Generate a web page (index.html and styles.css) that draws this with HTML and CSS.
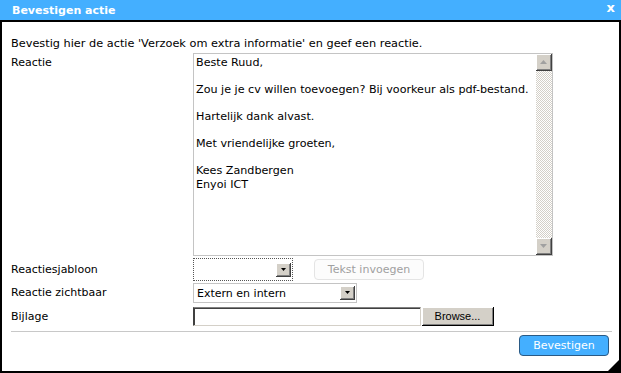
FILE: index.html
```html
<!DOCTYPE html>
<html lang="nl">
<head>
    <meta charset="UTF-8">
    <title>Bevestigen actie</title>
    <link rel="stylesheet" href="styles.css">
</head>
<body>
    <div class="dialog">
        <div class="titlebar">
            <span class="title">Bevestigen actie</span>
            <span class="close">x</span>
        </div>
        <div class="content">
            <p class="intro">Bevestig hier de actie 'Verzoek om extra informatie' en geef een reactie.</p>

            <div class="row row-top">
                <label class="label">Reactie</label>
                <div class="textarea">
                    <div class="textarea-text">Beste Ruud,

Zou je je cv willen toevoegen? Bij voorkeur als pdf-bestand.

Hartelijk dank alvast.

Met vriendelijke groeten,

Kees Zandbergen
Enyoi ICT</div>
                    <div class="scrollbar">
                        <span class="sb-btn">
                            <svg width="7" height="4" viewBox="0 0 7 4"><polygon points="3.5,0 7,4 0,4" fill="#a0a0a0"/></svg>
                        </span>
                        <span class="sb-track"></span>
                        <span class="sb-btn">
                            <svg width="7" height="4" viewBox="0 0 7 4"><polygon points="0,0 7,0 3.5,4" fill="#a0a0a0"/></svg>
                        </span>
                    </div>
                </div>
            </div>

            <div class="row row-sjabloon">
                <label class="label">Reactiesjabloon</label>
                <div class="select select-focus">
                    <span class="select-value"></span>
                    <span class="select-btn">
                        <svg width="5" height="3" viewBox="0 0 5 3"><polygon points="0,0 5,0 2.5,3" fill="#000"/></svg>
                    </span>
                </div>
                <button class="btn-disabled" disabled>Tekst invoegen</button>
            </div>

            <div class="row row-zichtbaar">
                <label class="label">Reactie zichtbaar</label>
                <div class="select select-wide">
                    <span class="select-value">Extern en intern</span>
                    <span class="select-btn">
                        <svg width="5" height="3" viewBox="0 0 5 3"><polygon points="0,0 5,0 2.5,3" fill="#000"/></svg>
                    </span>
                </div>
            </div>

            <div class="row row-bijlage">
                <label class="label">Bijlage</label>
                <span class="file-input"></span>
                <button class="btn-browse">Browse...</button>
            </div>

            <div class="footer">
                <button class="btn-primary">Bevestigen</button>
            </div>
        </div>
        <span class="grip"></span>
    </div>
</body>
</html>
```

FILE: styles.css
```css
body {
    margin: 0;
    padding: 0;
    background-color: #fff;
    font-family: "DejaVu Sans", Verdana, sans-serif;
    font-size: 11px;
    color: #000;
}

.dialog {
    position: relative;
    width: 621px;
    height: 373px;
    box-sizing: border-box;
    background-color: #fff;
    border-left: 2px solid #000;
    border-right: 2px solid #000;
    border-bottom: 2px solid #000;
    display: flex;
    flex-direction: column;
}

.titlebar {
    height: 20px;
    margin: 0 -2px;
    padding: 0 6px 0 12px;
    background-color: #44afff;
    border-bottom: 2px solid #000;
    display: flex;
    align-items: center;
    justify-content: space-between;
    color: #fff;
    font-weight: bold;
}

.title {
    line-height: 20px;
    padding-top: 1px;
}

.close {
    font-size: 13px;
    line-height: 13px;
    margin-top: -5px;
}

.content {
    padding: 0 8px 0 9px;
    flex: 1;
    display: flex;
    flex-direction: column;
}

.intro {
    margin: 15px 0 2px 0;
    line-height: 14px;
    font-size: 11.3px;
}

.row {
    display: flex;
    align-items: center;
}

.row-top {
    align-items: flex-start;
}

.label {
    width: 182px;
    flex-shrink: 0;
    line-height: 14px;
}

.row-top .label {
    padding-top: 3px;
}

/* textarea */
.textarea {
    width: 360px;
    height: 203px;
    box-sizing: border-box;
    border: 1px solid #c4c4c4;
    display: flex;
}

.textarea-text {
    flex: 1;
    padding: 2px 2px;
    white-space: pre-line;
    line-height: 13.5px;
    font-size: 11.15px;
}

.scrollbar {
    width: 16px;
    display: flex;
    flex-direction: column;
}

.sb-btn {
    height: 17px;
    box-sizing: border-box;
    background-color: #d4d0c8;
    border-right: 1px solid #404040;
    border-bottom: 1px solid #404040;
    box-shadow: inset 1px 1px #fff, inset -1px -1px #808080;
    display: flex;
    align-items: center;
    justify-content: center;
}

.sb-track {
    flex: 1;
    background: repeating-conic-gradient(#d4d0c8 0 25%, #fff 0 50%) 0 0 / 2px 2px;
}

/* selects */
.row-sjabloon {
    margin-top: 2px;
}

.select {
    height: 20px;
    box-sizing: border-box;
    border: 1px solid #c4c4c4;
    display: flex;
    align-items: center;
    justify-content: space-between;
    padding: 0 1px 0 3px;
    background-color: #fff;
}

.select-focus {
    width: 100px;
    height: 23px;
    border: 1px dotted #555;
}

.select-wide {
    width: 164px;
}

.select-btn {
    width: 15px;
    height: 14px;
    box-sizing: border-box;
    background-color: #d4d0c8;
    border-right: 1px solid #404040;
    border-bottom: 1px solid #404040;
    box-shadow: inset 1px 1px #fff, inset -1px -1px #808080;
    display: flex;
    align-items: center;
    justify-content: center;
}

.btn-disabled {
    margin-left: 21px;
    width: 110px;
    height: 21px;
    background-color: #fcfcfc;
    border: 1px solid #e4e4e4;
    border-radius: 4px;
    color: #a0a0a0;
    font-family: "DejaVu Sans", Verdana, sans-serif;
    font-size: 11px;
    padding: 0;
}

.row-zichtbaar {
    margin-top: 2px;
}

.row-bijlage {
    margin-top: 4px;
}

.file-input {
    width: 228px;
    height: 19px;
    box-sizing: border-box;
    border-top: 1px solid #808080;
    border-left: 1px solid #404040;
    border-right: 1px solid #d4d0c8;
    border-bottom: 1px solid #d4d0c8;
    box-shadow: inset 1px 1px #404040;
}

.btn-browse {
    margin-left: 1px;
    width: 72px;
    height: 19px;
    box-sizing: border-box;
    background-color: #d4d0c8;
    border: none;
    border-right: 1px solid #000;
    border-bottom: 1px solid #000;
    box-shadow: inset 1px 1px #fff, inset -1px -1px #808080;
    font-family: "Liberation Sans", Arial, sans-serif;
    font-size: 11px;
    color: #000;
    padding: 0;
}

.footer {
    margin-top: 5px;
    border-top: 1px solid #c8c8c8;
    padding-top: 3px;
    display: flex;
    justify-content: flex-end;
    margin-right: -1px;
}

.btn-primary {
    width: 90px;
    height: 21px;
    margin-right: 3px;
    background-color: #44afff;
    border: 1px solid #2a5a85;
    border-radius: 4px;
    color: #fff;
    font-family: "DejaVu Sans", Verdana, sans-serif;
    font-size: 11px;
    padding: 0;
}

.grip {
    position: absolute;
    right: 0;
    bottom: 0;
    width: 0;
    height: 0;
    border-left: 11px solid transparent;
    border-bottom: 11px solid #000;
}
```
